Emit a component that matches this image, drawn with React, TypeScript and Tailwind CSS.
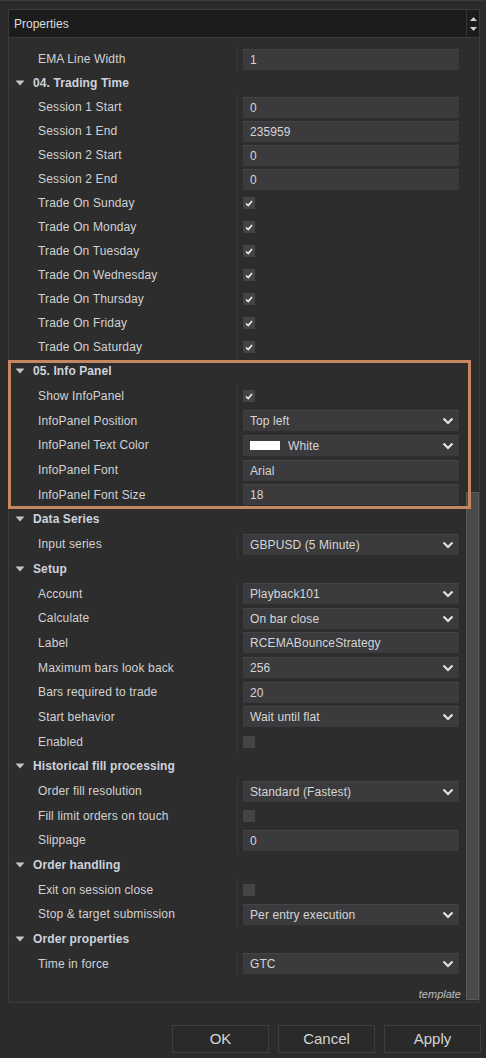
import React from 'react';

type Row =
  | { kind: 'group'; label: string }
  | { kind: 'text'; label: string; value: string }
  | { kind: 'select'; label: string; value: string; swatch?: boolean }
  | { kind: 'check'; label: string; checked: boolean };

const topRows: Row[] = [
  { kind: 'text', label: 'EMA Line Width', value: '1' },
  { kind: 'group', label: '04. Trading Time' },
  { kind: 'text', label: 'Session 1 Start', value: '0' },
  { kind: 'text', label: 'Session 1 End', value: '235959' },
  { kind: 'text', label: 'Session 2 Start', value: '0' },
  { kind: 'text', label: 'Session 2 End', value: '0' },
  { kind: 'check', label: 'Trade On Sunday', checked: true },
  { kind: 'check', label: 'Trade On Monday', checked: true },
  { kind: 'check', label: 'Trade On Tuesday', checked: true },
  { kind: 'check', label: 'Trade On Wednesday', checked: true },
  { kind: 'check', label: 'Trade On Thursday', checked: true },
  { kind: 'check', label: 'Trade On Friday', checked: true },
  { kind: 'check', label: 'Trade On Saturday', checked: true },
];

const bottomRows: Row[] = [
  { kind: 'group', label: '05. Info Panel' },
  { kind: 'check', label: 'Show InfoPanel', checked: true },
  { kind: 'select', label: 'InfoPanel Position', value: 'Top left' },
  { kind: 'select', label: 'InfoPanel Text Color', value: 'White', swatch: true },
  { kind: 'text', label: 'InfoPanel Font', value: 'Arial' },
  { kind: 'text', label: 'InfoPanel Font Size', value: '18' },
  { kind: 'group', label: 'Data Series' },
  { kind: 'select', label: 'Input series', value: 'GBPUSD (5 Minute)' },
  { kind: 'group', label: 'Setup' },
  { kind: 'select', label: 'Account', value: 'Playback101' },
  { kind: 'select', label: 'Calculate', value: 'On bar close' },
  { kind: 'text', label: 'Label', value: 'RCEMABounceStrategy' },
  { kind: 'select', label: 'Maximum bars look back', value: '256' },
  { kind: 'text', label: 'Bars required to trade', value: '20' },
  { kind: 'select', label: 'Start behavior', value: 'Wait until flat' },
  { kind: 'check', label: 'Enabled', checked: false },
  { kind: 'group', label: 'Historical fill processing' },
  { kind: 'select', label: 'Order fill resolution', value: 'Standard (Fastest)' },
  { kind: 'check', label: 'Fill limit orders on touch', checked: false },
  { kind: 'text', label: 'Slippage', value: '0' },
  { kind: 'group', label: 'Order handling' },
  { kind: 'check', label: 'Exit on session close', checked: false },
  { kind: 'select', label: 'Stop & target submission', value: 'Per entry execution' },
  { kind: 'group', label: 'Order properties' },
  { kind: 'select', label: 'Time in force', value: 'GTC' },
];

const Chevron = () => (
  <svg width="12" height="8" viewBox="0 0 12 8" className="shrink-0">
    <polyline points="1.5,1.5 6,6 10.5,1.5" fill="none" stroke="#e2e2e2" strokeWidth="2.2" />
  </svg>
);

const Caret = () => (
  <svg width="10" height="6" viewBox="0 0 10 6" className="shrink-0">
    <polygon points="0.5,0.5 9.5,0.5 5,5.5" fill="#c4c4c4" />
  </svg>
);

const PropRow: React.FC<{ row: Row; tall?: boolean }> = ({ row, tall }) => {
  const h = tall ? 'h-[24.7px]' : 'h-[24px]';
  if (row.kind === 'group') {
    return (
      <div className={`${h} flex items-center pl-[6px] gap-[8px]`}>
        <Caret />
        <span className="font-bold text-[12px] tracking-[0.1px] text-[#cdd3dc]">{row.label}</span>
      </div>
    );
  }
  return (
    <div className={`${h} flex items-center`}>
      <div className="w-[228px] pl-[29px] text-[12px] tracking-[0.15px] text-[#d2d2d2] truncate">{row.label}</div>
      <div className="w-px h-full bg-[#383838]" />
      <div className="pl-[5px] flex items-center">
        {row.kind === 'check' ? (
          <div className="w-[12px] h-[12px] bg-[#444446] flex items-center justify-center">
            {row.checked && (
              <svg width="8" height="7" viewBox="0 0 8 7">
                <polyline points="1,3.5 3.2,5.5 7,1" fill="none" stroke="#f0f0f0" strokeWidth="1.6" />
              </svg>
            )}
          </div>
        ) : (
          <div className="w-[216px] h-[21px] bg-[#3b3b3e] border-t border-[#444447] flex items-center pl-[7px] pr-[5px] text-[12px] tracking-[0.1px] text-[#d6d6d6]">
            {row.kind === 'select' && row.swatch && (
              <div className="w-[30px] h-[9px] bg-white mr-[8px] shrink-0" />
            )}
            <span className="flex-1 truncate">{row.value}</span>
            {row.kind === 'select' && <Chevron />}
          </div>
        )}
      </div>
    </div>
  );
};

export default function App() {
  return (
    <div
      className="relative w-[486px] h-[1058px] bg-[#2b2b2b] overflow-hidden"
      style={{ fontFamily: '"Liberation Sans", Arial, sans-serif' }}
    >
      <div className="h-[3px] bg-[#363636] border-b border-[#222]" />
      <div className="pt-[6px] pl-[8px] pr-[6px]">
        {/* header */}
        <div className="h-[29px] bg-[#1c1c1c] border border-[#3a3a3a] flex items-center">
          <span className="pl-[5px] flex-1 text-[12px] text-[#dcdcdc]">Properties</span>
          <div className="w-[13px] h-full border-l border-[#333] flex flex-col items-center justify-center gap-[6px]">
            <svg width="7" height="4" viewBox="0 0 7 4">
              <polygon points="0,4 7,4 3.5,0" fill="#cfcfcf" />
            </svg>
            <svg width="7" height="4" viewBox="0 0 7 4">
              <polygon points="0,0 7,0 3.5,4" fill="#cfcfcf" />
            </svg>
          </div>
        </div>
        {/* panel */}
        <div className="h-[965px] bg-[#2d2d2e] border border-t-0 border-[#3c3c3c] flex">
          <div className="flex-1 flex flex-col">
            <div className="pt-[9px]">
              {topRows.map((r, i) => (
                <PropRow key={i} row={r} />
              ))}
              {bottomRows.map((r, i) => (
                <PropRow key={`b${i}`} row={r} tall />
              ))}
            </div>
            <div className="pt-[10px] pr-[5px] text-right italic text-[11px] text-[#bdbdbd]">template</div>
          </div>
          <div className="w-[13px] flex flex-col">
            <div className="h-[454px]" />
            <div className="flex-1 mb-[2px] bg-[#4a4a4a] border border-[#5a5a5a]" />
          </div>
        </div>
      </div>
      {/* buttons */}
      <div className="flex justify-end gap-[9px] pr-[5px] pt-[22px]">
        {['OK', 'Cancel', 'Apply'].map((b) => (
          <div
            key={b}
            className="w-[97px] h-[28px] bg-[#2a2a2a] border border-[#3e3e3e] flex items-center justify-center text-[15px] text-[#d4d4d4]"
          >
            {b}
          </div>
        ))}
      </div>
      {/* highlight box */}
      <div className="absolute left-[8px] top-[360px] w-[463px] h-[149px] border-[3px] border-[#c4875f] pointer-events-none" />
    </div>
  );
}
